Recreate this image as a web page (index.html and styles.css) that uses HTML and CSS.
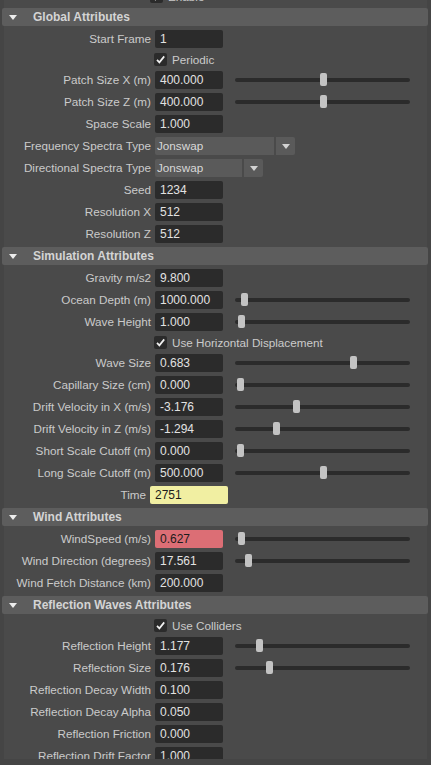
FILE: index.html
```html
<!DOCTYPE html>
<html>
<head>
<meta charset="utf-8">
<link rel="stylesheet" href="styles.css">
</head>
<body>
<div class="editor">
  <div class="scroll">
    <div class="inner">
      <section class="section">
        <div class="body">
          <div class="check-row check-row--top">
            <span class="box"><svg viewBox="0 0 13 13" width="13" height="13"><path d="M3 6.8 L5.4 9.4 L10.2 3.4" fill="none" stroke="#f0f0f0" stroke-width="1.7"/></svg></span>
            <span class="check-label">Enable</span>
          </div>
        </div>
      </section>

      <section class="section">
        <div class="head"><span class="tri"></span><span class="title">Global Attributes</span></div>
        <div class="body">
          <div class="row"><span class="label">Start Frame</span><span class="field">1</span></div>
          <div class="check-row">
            <span class="box"><svg viewBox="0 0 13 13" width="13" height="13"><path d="M3 6.8 L5.4 9.4 L10.2 3.4" fill="none" stroke="#f0f0f0" stroke-width="1.7"/></svg></span>
            <span class="check-label">Periodic</span>
          </div>
          <div class="row"><span class="label">Patch Size X (m)</span><span class="field">400.000</span><div class="slider"><div class="track"></div><div class="thumb" style="left:85px"></div></div></div>
          <div class="row"><span class="label">Patch Size Z (m)</span><span class="field">400.000</span><div class="slider"><div class="track"></div><div class="thumb" style="left:85px"></div></div></div>
          <div class="row"><span class="label">Space Scale</span><span class="field">1.000</span></div>
          <div class="row"><span class="label">Frequency Spectra Type</span><div class="select"><span class="select-value select-value--wide">Jonswap</span><span class="select-btn"><span class="arrow"></span></span></div></div>
          <div class="row"><span class="label">Directional Spectra Type</span><div class="select"><span class="select-value select-value--narrow">Jonswap</span><span class="select-btn"><span class="arrow"></span></span></div></div>
          <div class="row"><span class="label">Seed</span><span class="field">1234</span></div>
          <div class="row"><span class="label">Resolution X</span><span class="field">512</span></div>
          <div class="row"><span class="label">Resolution Z</span><span class="field">512</span></div>
        </div>
      </section>

      <section class="section">
        <div class="head"><span class="tri"></span><span class="title">Simulation Attributes</span></div>
        <div class="body">
          <div class="row"><span class="label">Gravity m/s2</span><span class="field">9.800</span></div>
          <div class="row"><span class="label">Ocean Depth (m)</span><span class="field">1000.000</span><div class="slider"><div class="track"></div><div class="thumb" style="left:6px"></div></div></div>
          <div class="row"><span class="label">Wave Height</span><span class="field">1.000</span><div class="slider"><div class="track"></div><div class="thumb" style="left:3px"></div></div></div>
          <div class="check-row">
            <span class="box"><svg viewBox="0 0 13 13" width="13" height="13"><path d="M3 6.8 L5.4 9.4 L10.2 3.4" fill="none" stroke="#f0f0f0" stroke-width="1.7"/></svg></span>
            <span class="check-label">Use Horizontal Displacement</span>
          </div>
          <div class="row"><span class="label">Wave Size</span><span class="field">0.683</span><div class="slider"><div class="track"></div><div class="thumb" style="left:115px"></div></div></div>
          <div class="row"><span class="label">Capillary Size (cm)</span><span class="field">0.000</span><div class="slider"><div class="track"></div><div class="thumb" style="left:2px"></div></div></div>
          <div class="row"><span class="label">Drift Velocity in X (m/s)</span><span class="field">-3.176</span><div class="slider"><div class="track"></div><div class="thumb" style="left:58px"></div></div></div>
          <div class="row"><span class="label">Drift Velocity in Z (m/s)</span><span class="field">-1.294</span><div class="slider"><div class="track"></div><div class="thumb" style="left:38px"></div></div></div>
          <div class="row"><span class="label">Short Scale Cutoff (m)</span><span class="field">0.000</span><div class="slider"><div class="track"></div><div class="thumb" style="left:2px"></div></div></div>
          <div class="row"><span class="label">Long Scale Cutoff (m)</span><span class="field">500.000</span><div class="slider"><div class="track"></div><div class="thumb" style="left:85px"></div></div></div>
          <div class="row"><span class="label label--time">Time</span><span class="field field--time">2751</span></div>
        </div>
      </section>

      <section class="section">
        <div class="head"><span class="tri"></span><span class="title">Wind Attributes</span></div>
        <div class="body">
          <div class="row"><span class="label">WindSpeed (m/s)</span><span class="field field--keyed">0.627</span><div class="slider"><div class="track"></div><div class="thumb" style="left:3px"></div></div></div>
          <div class="row"><span class="label">Wind Direction (degrees)</span><span class="field">17.561</span><div class="slider"><div class="track"></div><div class="thumb" style="left:10px"></div></div></div>
          <div class="row"><span class="label">Wind Fetch Distance (km)</span><span class="field">200.000</span></div>
        </div>
      </section>

      <section class="section">
        <div class="head"><span class="tri"></span><span class="title">Reflection Waves Attributes</span></div>
        <div class="body">
          <div class="check-row">
            <span class="box"><svg viewBox="0 0 13 13" width="13" height="13"><path d="M3 6.8 L5.4 9.4 L10.2 3.4" fill="none" stroke="#f0f0f0" stroke-width="1.7"/></svg></span>
            <span class="check-label">Use Colliders</span>
          </div>
          <div class="row"><span class="label">Reflection Height</span><span class="field">1.177</span><div class="slider"><div class="track"></div><div class="thumb" style="left:21px"></div></div></div>
          <div class="row"><span class="label">Reflection Size</span><span class="field">0.176</span><div class="slider"><div class="track"></div><div class="thumb" style="left:31px"></div></div></div>
          <div class="row"><span class="label">Reflection Decay Width</span><span class="field">0.100</span></div>
          <div class="row"><span class="label">Reflection Decay Alpha</span><span class="field">0.050</span></div>
          <div class="row"><span class="label">Reflection Friction</span><span class="field">0.000</span></div>
          <div class="row"><span class="label">Reflection Drift Factor</span><span class="field">1.000</span></div>
        </div>
      </section>
    </div>
  </div>
</div>
</body>
</html>
```
FILE: styles.css
```css
html, body {
  margin: 0;
  padding: 0;
  background: #454545;
  height: 765px;
  overflow: hidden;
}

.editor {
  width: 431px;
  height: 765px;
  display: flex;
  flex-direction: column;
  font-family: "Liberation Sans", Arial, sans-serif;
}

.scroll {
  height: 759px;
  overflow: hidden;
}

.inner {
  margin-top: -15px;
  display: flex;
  flex-direction: column;
}

.head {
  height: 18px;
  margin: 0 3px 0 2px;
  background: #5d5d5d;
  border-radius: 2px;
  display: flex;
  align-items: center;
}

.tri {
  width: 0;
  height: 0;
  border-left: 4px solid transparent;
  border-right: 4px solid transparent;
  border-top: 5px solid #ececec;
  margin-left: 7px;
  margin-right: 16px;
}

.title {
  font-weight: bold;
  font-size: 12px;
  color: #d4d4d4;
  line-height: 18px;
}

.body {
  margin: 0 4px;
  background: #4a4a4a;
  padding: 4px 0;
  display: flex;
  flex-direction: column;
  gap: 4px;
}

.row {
  height: 18px;
  display: flex;
  align-items: center;
}

.label {
  width: 147px;
  margin-right: 4px;
  text-align: right;
  font-size: 11.7px;
  line-height: 18px;
  color: #cbcbcb;
  white-space: nowrap;
}

.label--time {
  width: 142px;
}

.field {
  width: 68px;
  height: 18px;
  box-sizing: border-box;
  padding-left: 5px;
  background: #2b2b2b;
  border-radius: 2px;
  font-size: 12px;
  line-height: 18px;
  color: #e2e2e2;
}

.field--time {
  width: 78px;
  background: #f1efa2;
  color: #1c1c1c;
}

.field--keyed {
  background: #dc6e75;
  color: #1c1c1c;
}

.slider {
  position: relative;
  width: 175px;
  height: 18px;
  margin-left: 12px;
  display: flex;
  align-items: center;
}

.track {
  width: 100%;
  height: 4px;
  background: #2b2b2b;
  border-radius: 2px;
}

.thumb {
  position: absolute;
  top: 2px;
  width: 7px;
  height: 13px;
  background: #c3c3c3;
  border-radius: 2px;
}

.check-row {
  height: 15px;
  display: flex;
  align-items: center;
  padding-left: 150px;
}

.check-row--top {
  padding-left: 146px;
}

.box {
  width: 13px;
  height: 13px;
  background: #2b2b2b;
  border-radius: 2px;
  display: flex;
}

.check-label {
  margin-left: 5px;
  font-size: 11.7px;
  line-height: 15px;
  color: #cbcbcb;
  white-space: nowrap;
}

.select {
  display: flex;
  gap: 2px;
  height: 18px;
}

.select-value {
  height: 18px;
  background: #5a5a5a;
  border-radius: 2px 0 0 2px;
  padding-left: 2px;
  box-sizing: border-box;
  font-size: 11.7px;
  line-height: 18px;
  color: #d8d8d8;
}

.select-value--wide {
  width: 119px;
}

.select-value--narrow {
  width: 87px;
}

.select-btn {
  width: 19px;
  height: 18px;
  background: #5a5a5a;
  border-radius: 0 2px 2px 0;
  display: flex;
  align-items: center;
  justify-content: center;
}

.arrow {
  width: 0;
  height: 0;
  border-left: 4.5px solid transparent;
  border-right: 4.5px solid transparent;
  border-top: 5px solid #d2d2d2;
}
```
